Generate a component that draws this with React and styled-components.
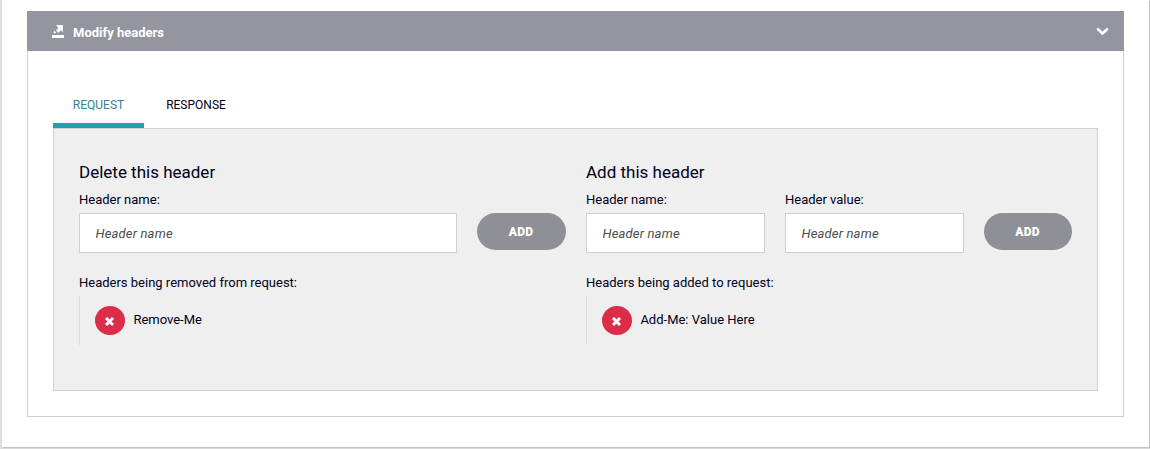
import React from "react";
import styled, { createGlobalStyle } from "styled-components";

const GlobalStyle = createGlobalStyle`
  *, *::before, *::after { box-sizing: border-box; }
  body {
    margin: 0;
    background: #dedede;
    font-family: Roboto, "Liberation Sans", sans-serif;
    font-size: 13px;
    color: #00001a;
  }
  #root { overflow: hidden; height: 449px; }
`;

const Sheet = styled.div`
  height: 447px;
  margin: 0 1px 2px 2px;
  padding: 11px 25px 30px;
  background: #fff;
  box-shadow: 1px 1px 1px rgba(0, 0, 0, 0.12);
`;

const Accordion = styled.section`
  height: 406px;
`;

const AccordionHeader = styled.header`
  display: flex;
  align-items: center;
  height: 40px;
  padding: 0 15px 0 25px;
  background: #95959f;
  color: #fff;
`;

const AccordionTitle = styled.h2`
  flex: 1;
  margin: 3px 0 0 9px;
  font-size: 13px;
  line-height: 16px;
  font-weight: 700;
`;

const ModifyIcon = styled.svg`
  display: block;
  width: 12px;
  height: 13px;
  fill: currentColor;
`;

const Chevron = styled.svg`
  display: block;
  width: 13px;
  height: 9px;
  fill: none;
  stroke: currentColor;
  stroke-width: 2.6;
  stroke-linecap: round;
`;

const AccordionBody = styled.div`
  height: 366px;
  padding: 30px 25px 0;
  border: 1px solid #cfcfcf;
  border-top: 0;
`;

const TabList = styled.nav`
  display: flex;
  gap: 2px;
  height: 47px;
`;

const Tab = styled.button`
  width: ${(p) => p.$width}px;
  height: 47px;
  padding: 5px 0 0;
  border: 0;
  border-bottom: 5px solid ${(p) => (p.$active ? "#20a0b0" : "transparent")};
  background: none;
  font: 400 12px/14px Roboto, sans-serif;
  color: ${(p) => (p.$active ? "#37808f" : "#00001a")};
  white-space: nowrap;
`;

const TabPanel = styled.div`
  display: grid;
  grid-template-columns: 487px 486px;
  gap: 20px;
  height: 263px;
  padding: 33px 25px 0;
  border: 1px solid #cfcfcf;
  background: #efefef;
`;

const Heading = styled.h3`
  margin: 0;
  font-size: 17px;
  line-height: 20px;
  font-weight: 400;
`;

const FormRow = styled.div`
  display: flex;
  align-items: flex-end;
  gap: 20px;
  height: 71px;
`;

const Field = styled.label`
  display: flex;
  flex: 1;
  flex-direction: column;
  min-width: 0;
  line-height: 16px;
`;

const FieldLabel = styled.span`
  margin-bottom: 5px;
`;

const Input = styled.input`
  width: 100%;
  height: 40px;
  padding: 1px 15.5px 0;
  border: 1px solid #cfcfcf;
  border-radius: 0;
  outline: 0;
  background: #fff;
  font: 400 13px/16px Roboto, sans-serif;
  letter-spacing: 0.17px;
  &::placeholder {
    color: #4d4d4d;
    font-style: italic;
    opacity: 1;
  }
`;

const AddButton = styled.button`
  width: ${(p) => p.$width}px;
  height: 37px;
  margin-bottom: 3px;
  padding: 0 1px 0 0;
  border: 0;
  border-radius: 19px;
  background: #8f8f98;
  color: #fff;
  font: 900 12px/14px Roboto, sans-serif;
  letter-spacing: 0.3px;
`;

const ListLabel = styled.p`
  margin: 22px 0 5px;
  line-height: 16px;
`;

const HeaderList = styled.ul`
  margin: 0;
  padding: 10px 0 10px 15px;
  height: 49px;
  border-left: 1px solid #dcdcdc;
  list-style: none;
`;

const HeaderItem = styled.li`
  display: flex;
  gap: 8.4px;
  line-height: 27px;
`;

const RemoveButton = styled.button`
  display: flex;
  align-items: center;
  justify-content: center;
  width: 30px;
  height: 29px;
  padding: 1px 1px 0 0;
  border: 0;
  border-radius: 50%;
  background: #db2c49;
  color: #fff;
`;

const Cross = styled.svg`
  width: 9px;
  height: 9px;
  stroke: currentColor;
  stroke-width: 2.6;
`;

function HeaderGroup({ title, fields, buttonWidth, listLabel, item }) {
  return (
    <section>
      <Heading>{title}</Heading>
      <FormRow>
        {fields.map((label) => (
          <Field key={label}>
            <FieldLabel>{label}</FieldLabel>
            <Input placeholder="Header name" />
          </Field>
        ))}
        <AddButton $width={buttonWidth}>ADD</AddButton>
      </FormRow>
      <ListLabel>{listLabel}</ListLabel>
      <HeaderList>
        <HeaderItem>
          <RemoveButton aria-label="Remove">
            <Cross viewBox="0 0 8 8">
              <path d="M.9.9l6.2 6.2M7.1.9L.9 7.1" />
            </Cross>
          </RemoveButton>
          <span>{item}</span>
        </HeaderItem>
      </HeaderList>
    </section>
  );
}

export default function App() {
  return (
    <>
      <GlobalStyle />
      <Sheet>
        <Accordion>
          <AccordionHeader>
            <ModifyIcon viewBox="0 0 12 13">
              <path d="M0 10h12v3H0zM4 0h7v7L8.900 5.200 6.300 7.800 4 5.500 6.300 3z" />
              <path d="M2.500 5.800l1.600 1.600-1.500 1.300L1.500 7z" />
            </ModifyIcon>
            <AccordionTitle>Modify headers</AccordionTitle>
            <Chevron viewBox="0 0 13 9">
              <path d="M2 2.200l4.500 4.300L11 2.200" />
            </Chevron>
          </AccordionHeader>
          <AccordionBody>
            <TabList>
              <Tab $active $width={91}>REQUEST</Tab>
              <Tab $width={100}>RESPONSE</Tab>
            </TabList>
            <TabPanel>
              <HeaderGroup
                title="Delete this header"
                fields={["Header name:"]}
                buttonWidth={89}
                listLabel="Headers being removed from request:"
                item="Remove-Me"
              />
              <HeaderGroup
                title="Add this header"
                fields={["Header name:", "Header value:"]}
                buttonWidth={88}
                listLabel="Headers being added to request:"
                item="Add-Me: Value Here"
              />
            </TabPanel>
          </AccordionBody>
        </Accordion>
      </Sheet>
    </>
  );
}
